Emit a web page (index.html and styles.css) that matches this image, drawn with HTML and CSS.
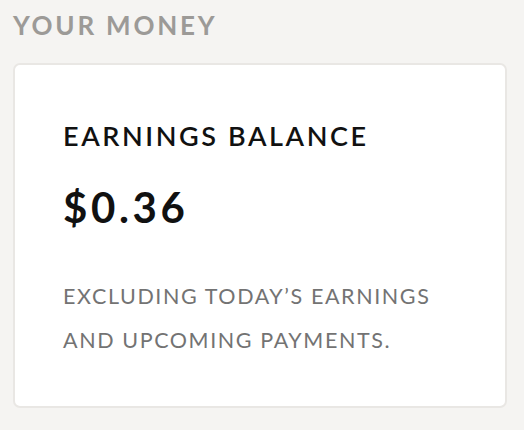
FILE: index.html
```html
<!DOCTYPE html>
<html lang="en">
<head>
    <meta charset="UTF-8">
    <meta name="viewport" content="width=device-width, initial-scale=1.0">
    <title>Your Money</title>
    <link rel="stylesheet" href="styles.css">
</head>
<body>
    <h2 class="section-title">YOUR MONEY</h2>
    <div class="card">
        <h3 class="card-label">EARNINGS BALANCE</h3>
        <div class="amount">$0.36</div>
        <p class="note">EXCLUDING TODAY’S EARNINGS<br>AND UPCOMING PAYMENTS.</p>
    </div>
</body>
</html>
```

FILE: styles.css
```css
body {
    font-family: Lato, "Open Sans", sans-serif;
    margin: 0;
    padding: 0;
    background-color: #f5f4f2;
}
.section-title {
    margin: 0;
    padding: 10px 13px 0;
    font-size: 26px;
    line-height: 30px;
    font-weight: 700;
    letter-spacing: 2.8px;
    color: #9c9a97;
}
.card {
    margin: 23px 17px 0 13px;
    padding: 55px 20px 44px 48px;
    background-color: white;
    border: 2px solid #e9e7e4;
    border-radius: 7px;
}
.card-label {
    margin: 0;
    font-size: 27px;
    line-height: 32px;
    font-weight: 600;
    letter-spacing: 2.6px;
    color: #111;
}
.amount {
    margin-top: 31px;
    font-size: 42px;
    line-height: 48px;
    font-weight: 700;
    letter-spacing: 3.6px;
    color: #111;
}
.note {
    margin: 43px 0 0;
    font-size: 21.5px;
    line-height: 44px;
    letter-spacing: 1.6px;
    color: #737373;
}
```
